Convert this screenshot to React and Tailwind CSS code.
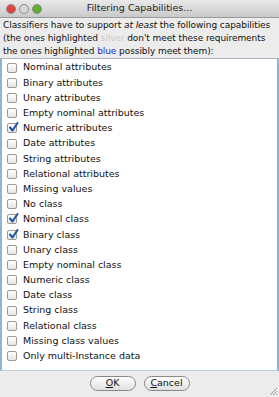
const caps = [
  { label: 'Nominal attributes', on: false },
  { label: 'Binary attributes', on: false },
  { label: 'Unary attributes', on: false },
  { label: 'Empty nominal attributes', on: false },
  { label: 'Numeric attributes', on: true },
  { label: 'Date attributes', on: false },
  { label: 'String attributes', on: false },
  { label: 'Relational attributes', on: false },
  { label: 'Missing values', on: false },
  { label: 'No class', on: false },
  { label: 'Nominal class', on: true },
  { label: 'Binary class', on: true },
  { label: 'Unary class', on: false },
  { label: 'Empty nominal class', on: false },
  { label: 'Numeric class', on: false },
  { label: 'Date class', on: false },
  { label: 'String class', on: false },
  { label: 'Relational class', on: false },
  { label: 'Missing class values', on: false },
  { label: 'Only multi-Instance data', on: false },
];

function Light({ color }) {
  return (
    <span
      className={`w-[10px] h-[10px] rounded-full border border-[#8a8a8a] ${color}`}
    />
  );
}

function Check({ on }) {
  return (
    <span className="relative w-[10px] h-[10px] rounded-[2px] border border-[#9a9a9a] bg-gradient-to-b from-[#ffffff] to-[#e6e6e6] shrink-0">
      {on && (
        <svg className="absolute -top-[2px] left-[0px]" width="11" height="11" viewBox="0 0 11 11">
          <path d="M2 5.5 L4.5 8.5 L9.5 1" fill="none" stroke="#1f4fa8" strokeWidth="2" strokeLinecap="round" strokeLinejoin="round" />
        </svg>
      )}
    </span>
  );
}

export default function App() {
  return (
    <div
      className="w-[279px] h-[397px] bg-[#ececec] flex flex-col text-[#111] overflow-hidden"
      style={{ fontFamily: '"DejaVu Sans", sans-serif' }}
    >
      {/* title bar */}
      <div className="relative h-[18px] shrink-0 bg-gradient-to-b from-[#eaeaea] to-[#c9c9c9] border-b border-[#9a9a9a] flex items-center">
        <div className="flex gap-[3px] pl-[6px]">
          <Light color="bg-[#e0443a]" />
          <Light color="bg-[#d6d6d6]" />
          <Light color="bg-[#5cb030]" />
        </div>
        <div className="absolute inset-0 flex items-center justify-center text-[9.5px] text-[#222]">
          Filtering Capabilities...
        </div>
      </div>

      {/* description */}
      <div className="px-[3px] pt-[1px] text-[9px] tracking-[-0.07px] leading-[13px] h-[39px] shrink-0 whitespace-nowrap">
        <div>Classifiers have to support <i>at least</i> the following capabilities</div>
        <div>(the ones highlighted <span className="text-[#c8c8c8]">silver</span> don't meet these requirements</div>
        <div>the ones highlighted <span className="text-[#1a2fc8]">blue</span> possibly meet them):</div>
      </div>

      {/* list */}
      <div className="mt-[1px] h-[313px] shrink-0 bg-white border-t border-[#a8b4c0] border-x-2 border-x-[#8fb4d4] border-b border-b-[#b8ccdc] pt-[1px] pl-[5px]">
        {caps.map((c) => (
          <div key={c.label} className="h-[15.2px] flex items-center gap-[6px] text-[9.5px]">
            <Check on={c.on} />
            <span>{c.label}</span>
          </div>
        ))}
      </div>

      {/* buttons */}
      <div className="relative flex-1 flex justify-center items-center gap-[8px] pb-[2px]">
        <button className="w-[46px] h-[15px] rounded-full border border-[#888] bg-gradient-to-b from-[#ffffff] to-[#e0e0e0] text-[9.5px] leading-none">
          <span className="underline">O</span>K
        </button>
        <button className="w-[46px] h-[15px] rounded-full border border-[#888] bg-gradient-to-b from-[#ffffff] to-[#e0e0e0] text-[9.5px] leading-none">
          <span className="underline">C</span>ancel
        </button>
        <svg className="absolute right-[1px] bottom-[1px]" width="10" height="10" viewBox="0 0 10 10">
          <path d="M9 2 L2 9 M9 5 L5 9 M9 8 L8 9" stroke="#999" strokeWidth="1" />
        </svg>
      </div>
    </div>
  );
}
